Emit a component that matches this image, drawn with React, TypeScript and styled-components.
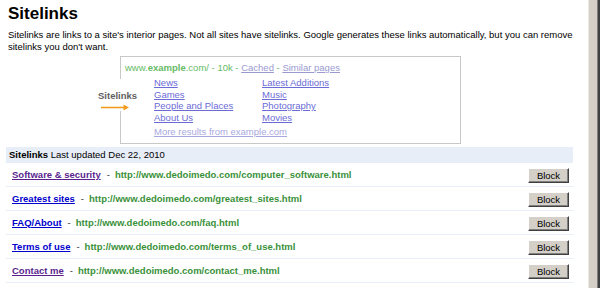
import * as React from "react";
import styled, { createGlobalStyle } from "styled-components";

const GlobalStyle = createGlobalStyle`
  html, body {
    margin: 0;
    padding: 0;
    background: #ffffff;
    font-family: "Liberation Sans", Arial, sans-serif;
  }
`;

const Page = styled.div`
  display: flex;
  width: 600px;
  height: 288px;
  overflow: hidden;
`;

const Main = styled.div`
  flex: 1;
  padding: 4px 15px 0 6px;
`;

const FrameEdge = styled.div`
  width: 9px;
  background: #d4d0c8;
  border-left: 1px solid #ece9e2;
  border-right: 2px solid #404040;
  box-shadow: inset -1px 0 #808080;
`;

const Title = styled.h1`
  margin: 0;
  padding-left: 2px;
  font-size: 17px;
  line-height: 20px;
  font-weight: bold;
  color: #000;
`;

const Intro = styled.p`
  margin: 5px 0 0;
  padding-left: 2px;
  font-size: 9.5px;
  line-height: 12px;
  color: #000;
`;

const ExampleBox = styled.div`
  position: relative;
  margin: 3px 0 0 114px;
  width: 332px;
  padding: 5px 3px 6px 4px;
  border: 1px solid #c8c8c8;
  font-size: 9.5px;
  line-height: 11px;
`;

const ResultUrl = styled.div`
  color: #66bb66;
  b {
    font-weight: bold;
  }
`;

const Faded = styled.span`
  color: #9a9ad0;
  text-decoration: underline;
`;

const LinkGrid = styled.div`
  display: grid;
  grid-template-columns: 108px 108px;
  grid-auto-rows: 11.5px;
  margin: 4px 0 0 29px;
`;

const BoxLink = styled.span<{ $faded?: boolean }>`
  color: ${(p) => (p.$faded ? "#a8a8e0" : "#6b6bd6")};
  text-decoration: underline;
  white-space: nowrap;
`;

const MoreResults = styled.div`
  margin: 3px 0 0 29px;
`;

const Callout = styled.div`
  position: absolute;
  left: -25px;
  top: 22px;
  width: 42px;
  height: 32px;
  background: #fff;
  display: flex;
  flex-direction: column;
  padding-top: 11px;
  box-sizing: border-box;
`;

const CalloutLabel = styled.span`
  font-weight: bold;
  color: #606060;
  font-size: 9.5px;
  line-height: 11px;
  padding-left: 2px;
`;

const Arrow = () => (
  <svg width="38" height="9" viewBox="0 0 38 9" style={{ marginTop: 3 }}>
    <line x1="1" y1="4.5" x2="32" y2="4.5" stroke="#f39a1a" strokeWidth="2" />
    <polygon points="30,0.5 37,4.5 30,8.5" fill="#f39a1a" />
  </svg>
);

const Table = styled.div`
  margin-top: 3px;
  width: 567px;
`;

const HeaderBar = styled.div`
  height: 16px;
  line-height: 16px;
  background: #e8eef8;
  padding-left: 3px;
  font-size: 9.5px;
  color: #000;
  b {
    font-weight: bold;
  }
`;

const Row = styled.div`
  height: 23px;
  display: flex;
  align-items: center;
  padding: 0 4px 0 6px;
  border-bottom: 1px solid #e8eef8;
  font-size: 9.5px;
  font-weight: bold;
`;

const RowLink = styled.span<{ $visited?: boolean }>`
  color: ${(p) => (p.$visited ? "#5a1f8f" : "#0000cc")};
  text-decoration: underline;
`;

const Dash = styled.span`
  color: #333;
  font-weight: normal;
  padding: 0 5px 0 6px;
`;

const Url = styled.span`
  color: #3a913a;
  flex: 1;
`;

const BlockButton = styled.button`
  width: 41px;
  height: 15px;
  padding: 0;
  margin-top: 2px;
  background: #d4d0c8;
  border: 1px solid;
  border-color: #ffffff #404040 #404040 #ffffff;
  box-shadow: inset -1px -1px #808080;
  font-family: "Liberation Sans", Arial, sans-serif;
  font-size: 9.5px;
  color: #000;
`;

const rows = [
  { label: "Software & security", url: "http://www.dedoimedo.com/computer_software.html", visited: true },
  { label: "Greatest sites", url: "http://www.dedoimedo.com/greatest_sites.html", visited: false },
  { label: "FAQ/About", url: "http://www.dedoimedo.com/faq.html", visited: false },
  { label: "Terms of use", url: "http://www.dedoimedo.com/terms_of_use.html", visited: false },
  { label: "Contact me", url: "http://www.dedoimedo.com/contact_me.html", visited: true },
];

const boxLinks = [
  "News",
  "Latest Additions",
  "Games",
  "Music",
  "People and Places",
  "Photography",
  "About Us",
  "Movies",
];

export default function App() {
  return (
    <Page>
      <GlobalStyle />
      <Main>
        <Title>Sitelinks</Title>
        <Intro>
          Sitelinks are links to a site's interior pages. Not all sites have sitelinks. Google
          generates these links automatically, but you can remove sitelinks you don't want.
        </Intro>
        <ExampleBox>
          <ResultUrl>
            www.<b>example</b>.com/ - 10k - <Faded>Cached</Faded> - <Faded>Similar pages</Faded>
          </ResultUrl>
          <LinkGrid>
            {boxLinks.map((l) => (
              <div key={l}>
                <BoxLink>{l}</BoxLink>
              </div>
            ))}
          </LinkGrid>
          <MoreResults>
            <BoxLink $faded>More results from example.com</BoxLink>
          </MoreResults>
          <Callout>
            <CalloutLabel>Sitelinks</CalloutLabel>
            <Arrow />
          </Callout>
        </ExampleBox>
        <Table>
          <HeaderBar>
            <b>Sitelinks</b> Last updated Dec 22, 2010
          </HeaderBar>
          {rows.map((r) => (
            <Row key={r.label}>
              <RowLink $visited={r.visited}>{r.label}</RowLink>
              <Dash>-</Dash>
              <Url>{r.url}</Url>
              <BlockButton>Block</BlockButton>
            </Row>
          ))}
        </Table>
      </Main>
      <FrameEdge />
    </Page>
  );
}
